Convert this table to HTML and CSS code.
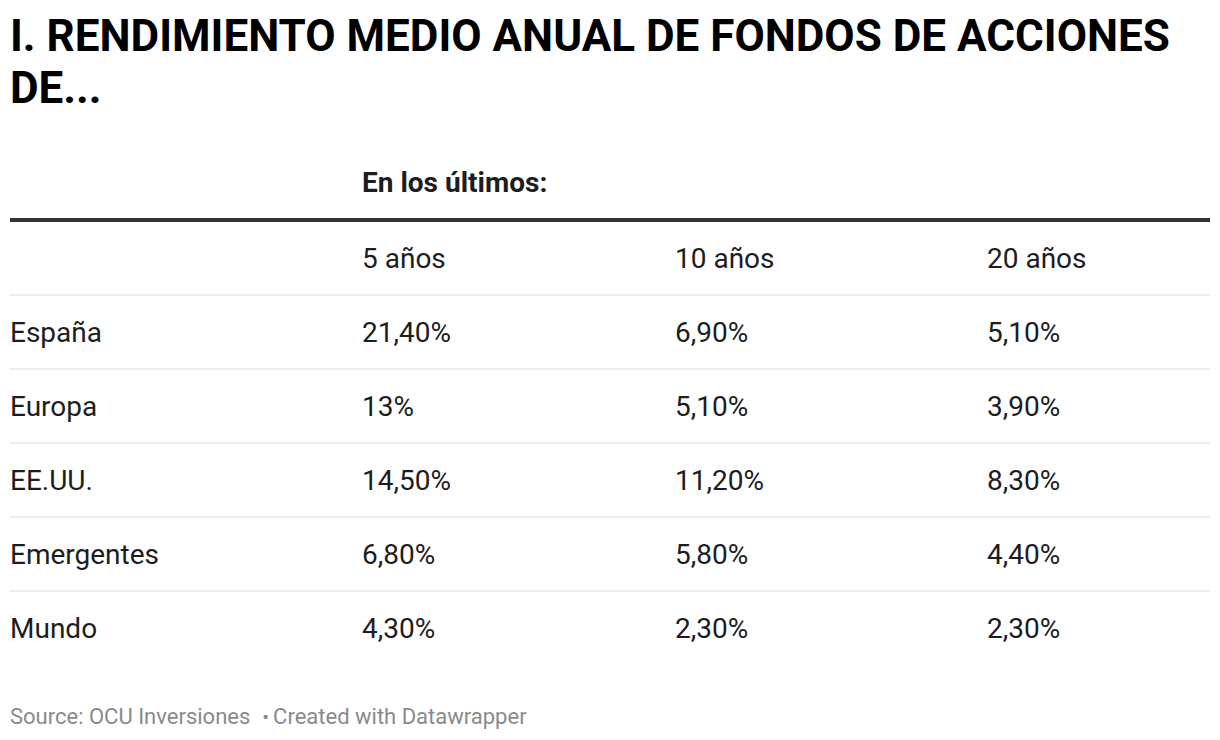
FILE: index.html
```html
<!DOCTYPE html>
<html lang="es">
<head>
<meta charset="utf-8">
<title>Rendimiento medio anual</title>
<link rel="stylesheet" href="styles.css">
</head>
<body>
<div class="chart">
  <h1 class="title">I. RENDIMIENTO MEDIO ANUAL DE FONDOS DE ACCIONES DE...</h1>
  <div class="table">
    <div class="group-head">
      <div class="cell"></div>
      <div class="cell group-label">En los últimos:</div>
    </div>
    <div class="row head">
      <div class="cell"></div>
      <div class="cell">5 años</div>
      <div class="cell">10 años</div>
      <div class="cell">20 años</div>
    </div>
    <div class="row">
      <div class="cell">España</div>
      <div class="cell">21,40%</div>
      <div class="cell">6,90%</div>
      <div class="cell">5,10%</div>
    </div>
    <div class="row">
      <div class="cell">Europa</div>
      <div class="cell">13%</div>
      <div class="cell">5,10%</div>
      <div class="cell">3,90%</div>
    </div>
    <div class="row">
      <div class="cell">EE.UU.</div>
      <div class="cell">14,50%</div>
      <div class="cell">11,20%</div>
      <div class="cell">8,30%</div>
    </div>
    <div class="row">
      <div class="cell">Emergentes</div>
      <div class="cell">6,80%</div>
      <div class="cell">5,80%</div>
      <div class="cell">4,40%</div>
    </div>
    <div class="row last">
      <div class="cell">Mundo</div>
      <div class="cell">4,30%</div>
      <div class="cell">2,30%</div>
      <div class="cell">2,30%</div>
    </div>
  </div>
  <div class="footer">
    <span class="source">Source: OCU Inversiones</span>
    <span class="sep">•</span>
    <span class="credit">Created with Datawrapper</span>
  </div>
</div>
</body>
</html>
```

FILE: styles.css
```css
* { box-sizing: border-box; }

html, body {
  margin: 0;
  padding: 0;
  background: #ffffff;
}

body {
  font-family: Roboto, "Liberation Sans", Arial, sans-serif;
  color: #1d1d1d;
}

.chart {
  padding: 10px 10px 0 10px;
}

.title {
  margin: 0;
  font-size: 44px;
  line-height: 52px;
  font-weight: 700;
  color: #000000;
  letter-spacing: 0;
}

.table {
  margin-top: 51px;
}

.group-head {
  display: grid;
  grid-template-columns: 352px 1fr;
  padding-bottom: 17px;
  border-bottom: 4px solid #333333;
}

.group-label {
  font-size: 28px;
  line-height: 36px;
  font-weight: 700;
  color: #1d1d1d;
}

.row {
  display: grid;
  grid-template-columns: 352px 313px 312px 1fr;
  height: 74px;
  padding-top: 1px;
  align-items: center;
  border-bottom: 2px solid #ececec;
  font-size: 28px;
  line-height: 36px;
}

.row.last {
  border-bottom: none;
  height: 72px;
}

.footer {
  margin-top: 40px;
  font-size: 22px;
  line-height: 26px;
  color: #8a8a8a;
  display: flex;
  align-items: center;
}

.sep {
  font-size: 20px;
  margin: 0 4px 0 12px;
}
```
